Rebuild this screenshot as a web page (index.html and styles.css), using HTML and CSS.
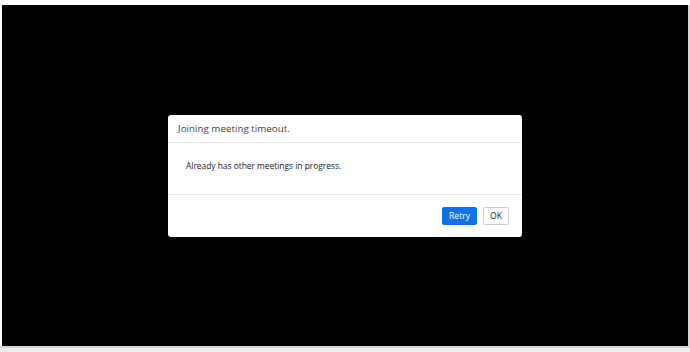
FILE: index.html
```html
<!DOCTYPE html>
<html lang="en">
<head>
  <meta charset="UTF-8" />
  <meta name="viewport" content="width=device-width, initial-scale=1.0" />
  <title>Meeting</title>
  <link rel="stylesheet" href="styles.css">
</head>
<body>
  <div class="stage">
    <div class="dialog">
      <div class="dialog-header">Joining meeting timeout.</div>
      <div class="dialog-body">Already has other meetings in progress.</div>
      <div class="dialog-footer">
        <button class="btn btn-primary">Retry</button>
        <button class="btn">OK</button>
      </div>
    </div>
  </div>
  <div class="bottom-bar"></div>
</body>
</html>
```

FILE: styles.css
```css
html, body {
    margin: 0;
    padding: 0;
}

body {
    font-family: "Open Sans", Arial, sans-serif;
    background-color: #fff;
    width: 690px;
    height: 352px;
    overflow: hidden;
}

.stage {
    margin: 5px 0 0 2px;
    width: 686px;
    height: 341px;
    background-color: #000;
    border-right: 2px solid #d6d6d6;
    display: flex;
    justify-content: center;
    align-items: center;
}

.bottom-bar {
    height: 6px;
    background-color: #efedea;
    border-top: 2px solid #d9d7d4;
}

.dialog {
    width: 354px;
    background-color: #fff;
    border-radius: 3px;
    margin-top: 1px;
}

.dialog-header {
    height: 27px;
    line-height: 28px;
    padding-left: 10px;
    font-size: 9.8px;
    color: #444;
    border-bottom: 1px solid #e8e8e8;
}

.dialog-body {
    height: 51px;
    line-height: 46px;
    padding-left: 18px;
    font-size: 8.4px;
    color: #1a1a1a;
    border-bottom: 1px solid #e8e8e8;
}

.dialog-footer {
    height: 42px;
    display: flex;
    justify-content: flex-end;
    align-items: center;
    gap: 6px;
    padding-right: 13px;
}

.btn {
    height: 18px;
    padding: 0 6px;
    font-family: "Open Sans", Arial, sans-serif;
    font-size: 8.6px;
    color: #1a1a1a;
    background-color: #fff;
    border: 1px solid #cfcfcf;
    border-radius: 2px;
    cursor: pointer;
}

.btn-primary {
    padding: 0 6px;
    background-color: #0e72ed;
    border-color: #0e72ed;
    color: #fff;
}
```
